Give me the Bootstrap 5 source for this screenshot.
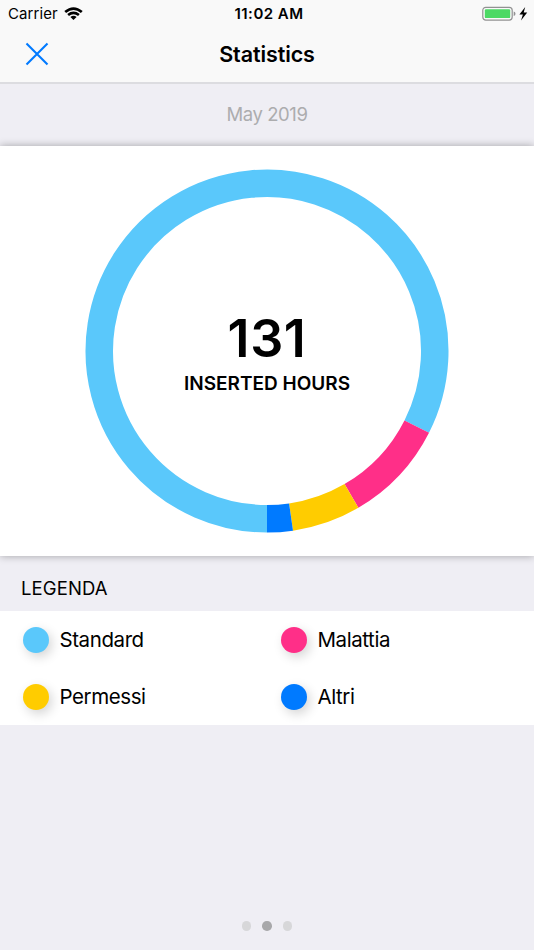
<!DOCTYPE html>
<html lang="en">
<head>
<meta charset="utf-8">
<meta name="viewport" content="width=device-width, initial-scale=1">
<title>Statistics</title>
<link href="https://cdn.jsdelivr.net/npm/bootstrap@5.3.0/dist/css/bootstrap.min.css" rel="stylesheet">
<style>
body{font-family:Inter,"Liberation Sans",sans-serif;background:#efeef4;color:#000;line-height:1}
.screen{height:950px;overflow:hidden}
.topbar{height:84px;background:#f9f9f9;border-bottom:2px solid #dcdce0}
.status{height:27px;padding:0 6px 0 8px}
.side{flex:1 1 0}
.carrier{font-size:15px;letter-spacing:.1px}
.clock{font-size:15px;letter-spacing:.48px;margin-left:2px}
.wifi{margin-left:6px}
.titlebar{height:55px;padding:0 25px}
.title{font-size:21.5px;letter-spacing:-.1px;padding-top:1px}
.close-btn{padding-bottom:2px}
.month{height:62px;font-size:18.5px;color:#acacae;letter-spacing:-.42px;padding-bottom:1px}
.chart{height:410px;box-shadow:0 0 8px rgba(0,0,0,.32);z-index:1}
.readout{padding-top:4px}
.total{font-size:52px;letter-spacing:.6px}
.caption{font-size:19px;margin-top:9px}
.legend-title{height:55px;padding:10px 21px 0;font-size:18.5px;letter-spacing:.1px}
.legend-list{height:114px}
.legend-list .row{width:516px}
.entry{height:57px;padding-left:23px;font-size:20.5px;letter-spacing:-.42px}
.entry-name{padding:2px 0 0 10.5px}
.swatch{width:26px;height:26px;box-shadow:3px 4px 11px rgba(0,0,0,.17)}
.c-standard{background:#5ac8fb}
.c-malattia{background:#ff2f88}
.c-permessi{background:#ffcc00}
.c-altri{background:#007aff}
.pager{gap:11px;padding-bottom:19px}
.dot{width:9.6px;height:9.6px;background:#d7d7d9}
.dot.current{background:#a8a8aa}
</style>
</head>
<body>
<main class="screen d-flex flex-column">
  <header class="topbar flex-shrink-0">
    <div class="status d-flex align-items-center">
      <div class="side d-flex align-items-center">
        <span class="carrier">Carrier</span>
        <svg class="wifi" width="19" height="13" viewBox="0 0 19 13" aria-hidden="true">
          <g fill="none" stroke="#000" stroke-width="2.7"><path d="M1.2 5Q9.5-1.9 17.8 5"/><path d="M4.1 8Q9.5 3.8 14.9 8"/></g>
          <path d="M6.4 9.9Q9.5 7.5 12.6 9.9L9.5 12.9Z"/>
        </svg>
      </div>
      <span class="clock fw-semibold">11:02 AM</span>
      <div class="side d-flex align-items-center justify-content-end">
        <svg width="46" height="16" viewBox="0 0 46 16" aria-hidden="true">
          <rect x=".8" y="1.3" width="29.4" height="12.8" rx="3" fill="none" stroke="#929292" stroke-width="1.2"/>
          <rect x="2.8" y="3.3" width="25.4" height="8.8" rx="1.2" fill="#4cd964"/>
          <path d="M31.7 5.5Q33.5 5.9 33.5 7.7T31.7 9.9Z" fill="#929292"/>
          <path d="M43.2 1L37.4 8.4H40.9L39 14.4L45.2 6.4H41.7Z"/>
        </svg>
      </div>
    </div>
    <div class="titlebar d-flex align-items-center">
      <div class="side">
        <button type="button" class="close-btn btn px-0 pt-0 border-0 d-flex" aria-label="Close">
          <svg width="24" height="24" viewBox="0 0 24 24"><path d="M1.5 1.5L22.5 22.5M22.5 1.5L1.5 22.5" stroke="#007aff" stroke-width="2.1"/></svg>
        </button>
      </div>
      <h1 class="title fw-semibold mb-0">Statistics</h1>
      <div class="side"></div>
    </div>
  </header>
  <div class="month flex-shrink-0 d-flex align-items-center justify-content-center">May 2019</div>
  <section class="chart flex-shrink-0 bg-white position-relative d-flex align-items-center justify-content-center">
    <svg width="364" height="364" viewBox="-182 -182 364 364" aria-hidden="true">
      <g fill="none" stroke-width="27.5">
        <path stroke="#5ac8fb" d="M0 167.75A167.75 167.75 0 1 1 149.75 75.62"/>
        <path stroke="#ff2f88" d="M149.75 75.62A167.75 167.75 0 0 1 84.45 144.94"/>
        <path stroke="#ffcc00" d="M84.45 144.94A167.75 167.75 0 0 1 24.05 166.02"/>
        <path stroke="#007aff" d="M24.05 166.02A167.75 167.75 0 0 1 0 167.75"/>
      </g>
    </svg>
    <div class="readout position-absolute top-50 start-50 translate-middle text-center text-nowrap">
      <div class="total fw-semibold">131</div>
      <div class="caption fw-semibold">INSERTED HOURS</div>
    </div>
  </section>
  <h2 class="legend-title flex-shrink-0 d-flex align-items-center m-0 fw-normal">LEGENDA</h2>
  <section class="legend-list flex-shrink-0 bg-white">
    <div class="row g-0">
      <div class="col-6 entry d-flex align-items-center"><span class="swatch c-standard rounded-circle"></span><span class="entry-name">Standard</span></div>
      <div class="col-6 entry d-flex align-items-center"><span class="swatch c-malattia rounded-circle"></span><span class="entry-name">Malattia</span></div>
      <div class="col-6 entry d-flex align-items-center"><span class="swatch c-permessi rounded-circle"></span><span class="entry-name">Permessi</span></div>
      <div class="col-6 entry d-flex align-items-center"><span class="swatch c-altri rounded-circle"></span><span class="entry-name">Altri</span></div>
    </div>
  </section>
  <nav class="pager mt-auto d-flex justify-content-center" aria-label="Pages">
    <span class="dot rounded-circle"></span><span class="dot current rounded-circle"></span><span class="dot rounded-circle"></span>
  </nav>
</main>
<script src="https://cdn.jsdelivr.net/npm/bootstrap@5.3.0/dist/js/bootstrap.bundle.min.js"></script>
</body>
</html>
